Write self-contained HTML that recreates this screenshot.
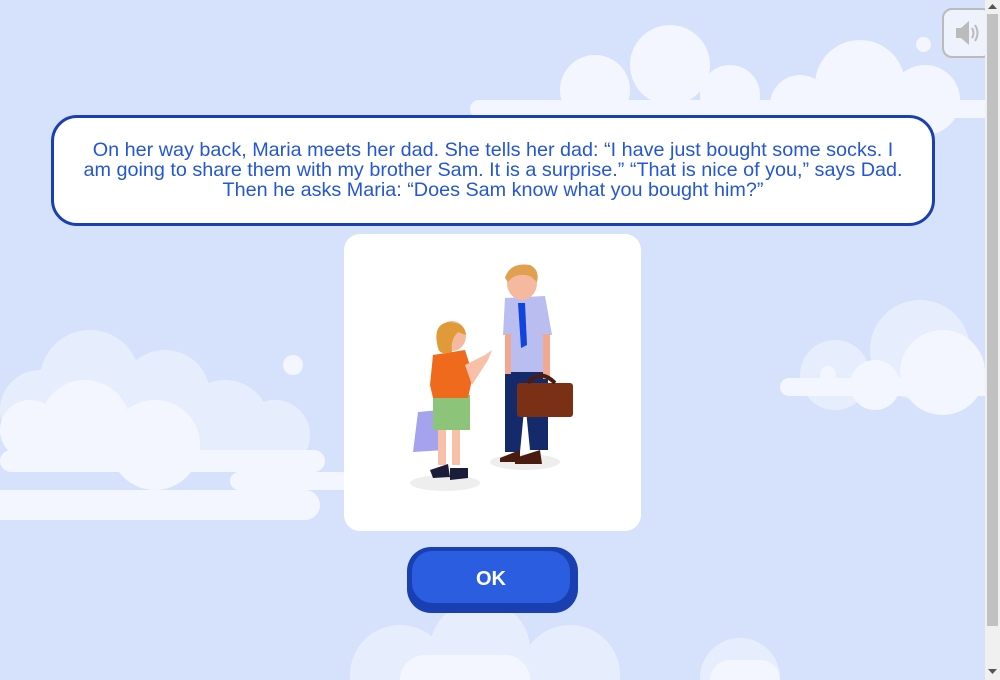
<!DOCTYPE html>
<html style="overflow:hidden;width:1000px;height:680px"><head><meta charset="utf-8"><style>
*{margin:0;padding:0;box-sizing:border-box}
html,body{width:1000px;height:680px;overflow:hidden}
body{background:#d6e2fb;font-family:"Liberation Sans",Arial,sans-serif}
#root{position:relative;width:1000px;height:680px;overflow:hidden}
.c{position:absolute;border-radius:50%;background:#e6eefd}
.w{background:#f3f6fe}
.bar{position:absolute;border-radius:20px;background:#eef3fe}
#box{position:absolute;left:51px;top:115px;width:884px;height:111px;background:#fff;border:3px solid #1a3fb0;border-radius:26px;color:#2456d6;font-size:19.8px;line-height:20px;text-align:center;padding:22px 0 0;white-space:nowrap}
#card{position:absolute;left:344px;top:234px;width:297px;height:297px;background:#fff;border-radius:16px}
#ok{position:absolute;left:407px;top:547px;width:171px;height:66px;background:#1a3fb0;border-radius:24px}
#ok div{position:absolute;left:5px;top:4px;right:8px;bottom:10px;background:#2a5de0;border-radius:20px;color:#fff;font-weight:bold;font-size:20px;text-align:center;line-height:56px}
#snd{position:absolute;left:942px;top:8px;width:50px;height:50px;border:2px solid #bbb;border-radius:10px;background:#eef2fd}
#sb{position:absolute;left:985px;top:0;width:15px;height:680px;background:#f0f0f0}
#sb div{position:absolute;left:2px;top:14px;width:11px;height:612px;background:#c1c1c1}
</style></head><body><div id="root">
<div class="c w" style="left:630px;top:25px;width:80px;height:80px"></div>
<div class="c w" style="left:560px;top:55px;width:70px;height:70px"></div>
<div class="c w" style="left:700px;top:65px;width:60px;height:60px"></div>
<div class="c w" style="left:815px;top:40px;width:90px;height:90px"></div>
<div class="c w" style="left:770px;top:75px;width:60px;height:60px"></div>
<div class="c w" style="left:890px;top:65px;width:70px;height:70px"></div>
<div class="bar" style="left:470px;top:100px;width:520px;height:18px;background:#f3f6fe;border-radius:9px 0 0 9px"></div>
<div class="c w" style="left:916px;top:37px;width:15px;height:15px"></div>
<div class="c" style="left:40px;top:330px;width:100px;height:100px"></div>
<div class="c" style="left:120px;top:350px;width:90px;height:90px"></div>
<div class="c" style="left:0px;top:370px;width:80px;height:80px"></div>
<div class="c" style="left:180px;top:380px;width:90px;height:90px"></div>
<div class="c" style="left:240px;top:400px;width:70px;height:70px"></div>
<div class="c w" style="left:283px;top:355px;width:20px;height:20px"></div>
<div class="c w" style="left:40px;top:380px;width:90px;height:90px"></div>
<div class="c w" style="left:110px;top:400px;width:90px;height:90px"></div>
<div class="c w" style="left:0px;top:400px;width:60px;height:60px"></div>
<div class="bar" style="left:0;top:450px;width:325px;height:22px;background:#f3f6fe"></div>
<div class="bar" style="left:230px;top:472px;width:120px;height:18px;background:#f3f6fe"></div>
<div class="bar" style="left:-20px;top:490px;width:340px;height:30px;background:#f3f6fe"></div>
<div class="c" style="left:870px;top:300px;width:100px;height:100px"></div>
<div class="c" style="left:800px;top:340px;width:70px;height:70px"></div>
<div class="c w" style="left:900px;top:330px;width:85px;height:85px"></div>
<div class="c w" style="left:850px;top:360px;width:50px;height:50px"></div>
<div class="bar" style="left:780px;top:378px;width:210px;height:18px;background:#f3f6fe;border-radius:9px 0 0 9px"></div>
<div class="c w" style="left:820px;top:366px;width:16px;height:16px"></div>
<div class="c" style="left:350px;top:625px;width:100px;height:55px;border-radius:50px 50px 0 0"></div>
<div class="c" style="left:430px;top:600px;width:100px;height:80px;border-radius:50px 50px 0 0"></div>
<div class="c" style="left:520px;top:625px;width:100px;height:55px;border-radius:50px 50px 0 0"></div>
<div class="c" style="left:700px;top:638px;width:80px;height:42px;border-radius:40px 40px 0 0"></div>
<div class="c w" style="left:400px;top:655px;width:130px;height:25px;border-radius:65px 65px 0 0"></div>
<div class="c w" style="left:710px;top:660px;width:70px;height:20px;border-radius:35px 35px 0 0"></div>

<div id="box">On her way back, Maria meets her dad. She tells her dad: “I have just bought some socks. I<br>am going to share them with my brother Sam. It is a surprise.” “That is nice of you,” says Dad.<br>Then he asks Maria: “Does Sam know what you bought him?”</div>

<div id="card"><svg width="297" height="297" viewBox="344 234 297 297">
<ellipse cx="445" cy="483" rx="35" ry="8" fill="#eee"/>
<ellipse cx="525" cy="462" rx="35" ry="8" fill="#eee"/>
<path d="M505 370 L548 370 L548 450 L530 450 L525 400 L520 452 L505 452 Z" fill="#142a6b"/>
<path d="M500 458 L520 450 L520 462 L500 462Z M515 458 L540 450 L542 464 L515 464Z" fill="#4a1c10"/>
<path d="M505 298 L545 296 L552 335 L545 335 L545 372 L508 372 L508 335 L503 335 Z" fill="#b9bdf0"/>
<path d="M518 303 L525 303 L527 345 L521 348 Z" fill="#1144dd"/>
<rect x="505" y="334" width="6" height="40" fill="#f0a890"/>
<rect x="543" y="334" width="7" height="45" fill="#f0a890"/>
<rect x="517" y="383" width="56" height="34" rx="3" fill="#7a3015"/>
<path d="M528 383 Q540 368 555 383" stroke="#4a1c10" stroke-width="4" fill="none"/>
<ellipse cx="522" cy="283" rx="15" ry="17" fill="#f5b9a0"/>
<path d="M505 278 Q510 262 530 265 Q540 270 537 282 L530 276 Q515 272 508 282Z" fill="#e0a050"/>
<path d="M418 412 L440 410 L445 450 L413 452Z" fill="#a5a2ee"/>
<rect x="438" y="425" width="8" height="40" fill="#f8c0a8"/>
<rect x="452" y="425" width="8" height="40" fill="#f8c0a8"/>
<path d="M430 470 L448 464 L450 477 L433 478Z M450 468 L468 468 L468 478 L450 480Z" fill="#1a1c3a"/>
<path d="M433 395 L470 395 L470 430 L433 430Z" fill="#8cc47a"/>
<path d="M433 355 L465 350 L473 375 L468 398 L433 398 L430 385Z" fill="#ef6a1c"/>
<path d="M465 365 L485 355 L492 350 L488 360 L472 385Z" fill="#f8c0a8"/>
<ellipse cx="452" cy="336" rx="14" ry="15" fill="#f5b9a0"/>
<path d="M438 348 Q432 325 448 322 Q465 322 466 335 L458 332 Q450 340 452 352 Q440 356 438 348Z" fill="#e09a38"/>
</svg></div>

<div id="ok"><div>OK</div></div>

<div id="snd"><svg width="46" height="46" viewBox="0 0 46 46"><path d="M12 18 H17 L25 11 V35 L17 28 H12Z" fill="#bbb"/><path d="M28 18 Q31 23 28 28 M31 15 Q36 23 31 31" stroke="#bbb" stroke-width="2" fill="none"/></svg></div>

<div id="sb"><div></div>
<svg style="position:absolute;left:3px;top:4px" width="9" height="6"><path d="M0 5 L4.5 0 L9 5Z" fill="#555"/></svg>
<svg style="position:absolute;left:3px;top:669px" width="9" height="6"><path d="M0 0 L4.5 5 L9 0Z" fill="#555"/></svg>
</div>
</div></body></html>
